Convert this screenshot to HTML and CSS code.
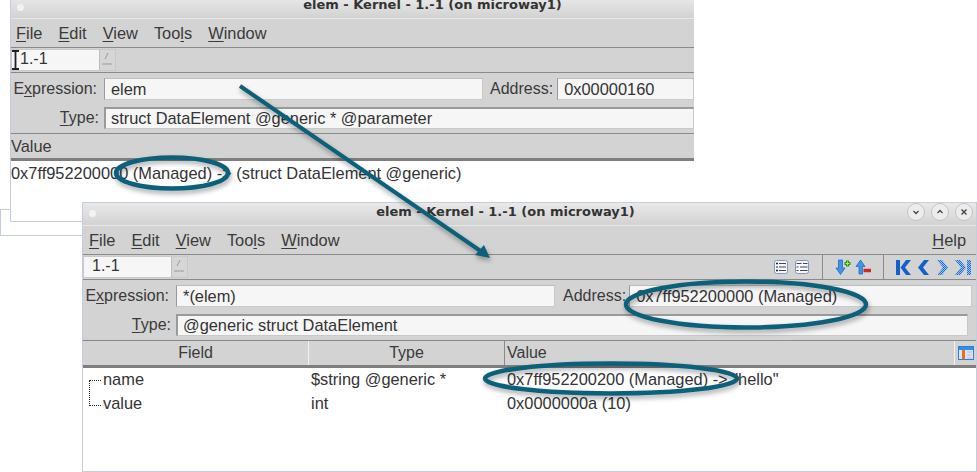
FILE: index.html
```html
<!DOCTYPE html>
<html lang="en">
<head>
<meta charset="utf-8">
<title>elem - Kernel</title>
<link rel="stylesheet" href="styles.css">
</head>
<body>
<div class="desk-line dl-a"></div>
<div class="desk-line dl-b"></div>
<div class="desk-line dl-c"></div>

<section class="win win-back">
  <header class="title"><span class="dot"></span><span class="title-text">elem - Kernel - 1.-1 (on microway1)</span></header>
  <nav class="menu"><span><u>F</u>ile</span><span><u>E</u>dit</span><span><u>V</u>iew</span><span>Too<u>l</u>s</span><span><u>W</u>indow</span></nav>
  <div class="bar">
    <div class="spin"><span class="spin-val">1.-1</span><span class="spin-btn"><svg width="14" height="18" viewBox="0 0 14 18"><path d="M8 3 5 9M2 14h10" stroke="#9a9a9a" fill="none"/></svg></span></div>
    <svg class="ibeam" width="7" height="20" viewBox="0 0 7 20"><path d="M0 1h7M3.500 1v18M0 19h7" stroke="#222" stroke-width="1.800" fill="none"/></svg>
  </div>
  <div class="fields">
    <div class="row row-a"><label class="lab"><span>E<u>x</u>pression:</span></label><div class="inp inp-expr">elem</div><label class="lab2">Address:</label><div class="inp inp-addr">0x00000160</div></div>
    <div class="row row-b"><label class="lab"><span><u>T</u>ype:</span></label><div class="inp inp-full">struct DataElement @generic * @parameter</div></div>
  </div>
  <div class="col-head"><span class="col-plain">Value</span></div>
  <div class="body body-back">0x7ff952200000 (Managed) -&gt; (struct DataElement @generic)</div>
</section>

<section class="win win-front">
  <header class="title"><span class="dot"></span><span class="title-text">elem - Kernel - 1.-1 (on microway1)</span>
    <span class="wbtns">
      <span class="wbtn"><svg width="10" height="10" viewBox="0 0 10 10"><path d="M2.500 4 5 6.500 7.500 4" stroke="#444" stroke-width="1.300" fill="none"/></svg></span>
      <span class="wbtn"><svg width="10" height="10" viewBox="0 0 10 10"><path d="M2.500 6 5 3.500 7.500 6" stroke="#444" stroke-width="1.300" fill="none"/></svg></span>
      <span class="wbtn"><svg width="10" height="10" viewBox="0 0 10 10"><path d="M2.500 2.500 7.500 7.500M7.500 2.500 2.500 7.500" stroke="#444" stroke-width="1.400" fill="none"/></svg></span>
    </span>
  </header>
  <nav class="menu"><span><u>F</u>ile</span><span><u>E</u>dit</span><span><u>V</u>iew</span><span>Too<u>l</u>s</span><span><u>W</u>indow</span><span class="help"><u>H</u>elp</span></nav>
  <div class="bar">
    <div class="spin spin-front"><span class="spin-val">1.-1</span><span class="spin-btn"><svg width="14" height="18" viewBox="0 0 14 18"><path d="M8 3 5 9M2 14h10" stroke="#9a9a9a" fill="none"/></svg></span></div>
    <div class="tools">
      <div class="tgroup tg-list">
        <svg width="14" height="14" viewBox="0 0 14 14"><rect x=".5" y=".5" width="13" height="13" rx="2" fill="#f6f8fc" stroke="#7e97c8"/><path d="M5 3.500h7M5 7h7M5 10.500h7" stroke="#444"/><path d="M2 3.500h2M3 2.500v2M2 7h2M2 10.500h2M3 9.500v2" stroke="#222"/></svg>
        <svg width="14" height="14" viewBox="0 0 14 14"><rect x=".5" y=".5" width="13" height="13" rx="2" fill="#f6f8fc" stroke="#7e97c8"/><path d="M1.500 3.500h5M5 7h7.500M5 10.500h7.500M1.500 7h2M1.500 10.500h2M8 3.500h4.500" stroke="#444"/></svg>
      </div>
      <div class="tgroup tg-move">
        <svg width="16" height="16" viewBox="0 0 16 16"><path d="M3.500 1h4v8H10l-4.500 6.500L1 9h2.500z" fill="#3f94e8" stroke="#1f6cc4" stroke-width=".8"/><path d="M9.500 4.500h6M12.500 1.500v6" stroke="#1d8f1d" stroke-width="3"/><path d="M10.500 4.500h4M12.500 2.500v4" stroke="#a6f060" stroke-width="1.200"/></svg>
        <svg width="16" height="16" viewBox="0 0 16 16"><path d="M4 15V7.500H1L5.500 1 10 7.500H7.500V15z" fill="#3f94e8" stroke="#1f6cc4" stroke-width=".8"/><path d="M8.500 11.500H16" stroke="#d0281e" stroke-width="3.500"/></svg>
      </div>
      <div class="tgroup tg-nav">
        <svg width="15" height="15" viewBox="0 0 15 15"><path d="M0 0h4v15H0zM15 0 9 7.500 15 15H10L4.500 7.500 10 0z" fill="#1560c8"/></svg>
        <svg width="13" height="15" viewBox="0 0 13 15"><path d="M12 0 6 7.500 12 15H7L1 7.500 7 0z" fill="#1560c8"/></svg>
        <svg width="13" height="15" viewBox="0 0 13 15"><defs><pattern id="dith" width="2" height="2" patternUnits="userSpaceOnUse"><rect width="2" height="2" fill="#9cc0ee"/><rect width="1" height="1" fill="#1f6fd8"/><rect x="1" y="1" width="1" height="1" fill="#1f6fd8"/></pattern></defs><path d="M1 0 7 7.500 1 15H6L12 7.500 6 0z" fill="url(#dith)"/></svg>
        <svg width="16" height="15" viewBox="0 0 16 15"><path d="M0 0 6 7.500 0 15H5L11 7.500 5 0zM12 0h4v15h-4z" fill="url(#dith)"/></svg>
      </div>
    </div>
  </div>
  <div class="fields">
    <div class="row row-a"><label class="lab"><span>E<u>x</u>pression:</span></label><div class="inp inp-expr">*(elem)</div><label class="lab2">Address:</label><div class="inp inp-addr2">0x7ff952200000 (Managed)</div></div>
    <div class="row row-b"><label class="lab"><span><u>T</u>ype:</span></label><div class="inp inp-type2">@generic struct DataElement</div></div>
  </div>
  <div class="col-head col-cols">
    <span class="col col-field">Field</span><span class="col col-type">Type</span><span class="col col-value">Value</span>
    <span class="col-icon"><svg width="16" height="14" viewBox="0 0 16 14"><rect x=".5" y=".5" width="15" height="13" fill="#dfe3f2" stroke="#2f7fd8"/><rect x="1" y="1" width="14" height="3" fill="#2f8fe8"/><rect x="4" y="4" width="3" height="9" fill="#e8701e"/><path d="M9 6h5M9 9h5M9 12h5" stroke="#b8b8d8"/></svg></span>
  </div>
  <div class="body body-front">
    <div class="tree-row">
      <span class="t-field t-name">name</span><span class="t-type">$string @generic *</span><span class="t-val">0x7ff952200200 (Managed) -&gt; "hello"</span>
    </div>
    <div class="tree-row">
      <span class="t-field t-value">value</span><span class="t-type">int</span><span class="t-val">0x0000000a (10)</span>
    </div>
  </div>
</section>

<svg class="marks" width="977" height="472" viewBox="0 0 977 472">
  <defs>
    <filter id="sh" x="-10%" y="-20%" width="120%" height="150%"><feDropShadow dx="1" dy="3" stdDeviation="2.500" flood-color="#000" flood-opacity=".35"/></filter>
  </defs>
  <g filter="url(#sh)" fill="none" stroke="#0f6179" stroke-width="4.500">
    <ellipse cx="172" cy="173" rx="56" ry="15.500"/>
    <ellipse cx="746" cy="304.500" rx="120" ry="23"/>
    <ellipse cx="611" cy="378.500" rx="126" ry="15"/>
  </g>
  <g filter="url(#sh)">
    <path d="M240 86 482 252" fill="none" stroke="#0f6179" stroke-width="4"/>
    <path d="M490 258 475 255 484 245z" fill="#0f6179"/>
  </g>
</svg>
</body>
</html>
```
FILE: styles.css
```css
* { box-sizing: border-box; }
html, body { margin: 0; padding: 0; }
body {
  position: relative;
  width: 977px;
  height: 472px;
  overflow: hidden;
  background: #fff;
  font-family: "Liberation Sans", Arial, sans-serif;
  font-size: 16.400px;
  color: #333;
}
u { text-underline-offset: 2px; text-decoration-thickness: 1px; }

.desk-line { position: absolute; background: #c3cde0; }
.dl-a { left: 0; top: 209px; width: 10px; height: 1px; }
.dl-b { left: 0; top: 235px; width: 83px; height: 1px; }
.dl-c { left: 0; top: 209px; width: 1px; height: 27px; }

.win {
  position: absolute;
  background: #fff;
  border: 1px solid #c3cde0;
  display: flex;
  flex-direction: column;
  overflow: hidden;
}
.win-back { left: 10px; top: -4px; width: 684px; height: 226px; border-right: 0; }
.win-front { left: 82px; top: 202px; width: 895px; height: 270px; }

.title {
  position: relative;
  height: 22px;
  flex: none;
  display: flex;
  align-items: center;
  justify-content: center;
  background: linear-gradient(#e9e9e9, #d2d2d2);
  border-bottom: 1px solid #e8e8e8;
}
.win-front .title { height: 23px; padding-bottom: 6px; }
.win-back .title { padding-bottom: 7px; }
.title-text {
  font-family: "DejaVu Sans", sans-serif;
  font-weight: 700;
  font-size: 13px;
  color: #333;
  white-space: nowrap;
}
.win-back .title-text { margin-left: 160px; }
.win-front .title-text { margin-right: 48px; }
.dot {
  position: absolute;
  left: 6px;
  top: 7px;
  width: 7px;
  height: 7px;
  border-radius: 50%;
  background: #f2f2f2;
}
.wbtns {
  position: absolute;
  right: 3px;
  top: 0;
  display: flex;
  gap: 6px;
}
.wbtn {
  width: 18px;
  height: 18px;
  border-radius: 50%;
  border: 1px solid #c4c4c4;
  background: #ececec;
  display: flex;
  align-items: center;
  justify-content: center;
}

.menu {
  height: 29px;
  flex: none;
  display: flex;
  align-items: center;
  gap: 16px;
  padding: 0 6px;
  background: #d3d3d3;
  border-bottom: 1px solid #8a8a8a;
  color: #3a3a3a;
}
.win-back .menu { padding-left: 5px; }
.help { margin-left: auto; padding-right: 4px; }

.bar {
  position: relative;
  height: 25px;
  flex: none;
  display: flex;
  align-items: center;
  background: #d3d3d3;
  border-bottom: 1px solid #8a8a8a;
}
.spin {
  width: 105px;
  height: 22px;
  display: flex;
  background: #f6f6f6;
  border: 1px solid #c9c9c9;
  font-size: 16px;
}
.spin-val { flex: 1; padding-left: 8px; color: #333; }
.spin-btn {
  width: 16px;
  background: #d6d6d6;
  border-left: 1px solid #bdbdbd;
}
.spin-btn svg { display: block; }
.ibeam { position: absolute; left: 1px; top: 2px; }

.tools {
  margin-left: auto;
  height: 100%;
  display: flex;
  align-items: center;
}
.tgroup {
  height: 100%;
  display: flex;
  align-items: center;
  border-right: 1px solid #8a8a8a;
}
.tg-list { gap: 7px; padding: 0 13px 0 0; }
.tg-move { gap: 4px; padding: 0 12px; }
.tg-nav { gap: 6px; padding: 0 5px 0 12px; border-right: 0; }

.fields {
  flex: none;
  background: #d3d3d3;
  padding: 5px 0 4px;
  display: flex;
  flex-direction: column;
  gap: 7px;
  border-bottom: 1px solid #8a8a8a;
}
.row { display: flex; align-items: center; }
.row-a { height: 22px; }
.row-b { height: 22px; }
.lab { width: 86px; flex: none; text-align: right; margin-right: 7px; font-size: 16px; color: #3a3a3a; }
.row-b .lab { width: 88px; margin-right: 5px; }
.lab2 { flex: none; padding: 0 4px 0 7px; font-size: 16px; color: #3a3a3a; }
.win-front .lab2 { padding: 0 3px 0 8px; }
.inp {
  height: 100%;
  background: #f6f6f6;
  border: 1px solid #c9c9c9;
  border-top: 2px solid #9a9a9a;
  border-left: 2px solid #9a9a9a;
  padding-left: 5px;
  flex: none;
  display: flex;
  align-items: center;
  white-space: nowrap;
  overflow: hidden;
  color: #333;
}
.row-a .inp { border-top: 1px solid #bdbdbd; border-left-width: 1px; padding-left: 6px; }
.inp-expr { width: 379px; }
.inp-addr { flex: 1; }
.inp-full { flex: 1; }
.inp-addr2 { width: 343px; }
.inp-type2 { width: 792px; }

.col-head {
  height: 27px;
  flex: none;
  display: flex;
  align-items: center;
  background: #d3d3d3;
  border-bottom: 3px solid #7e7e7e;
  color: #3a3a3a;
}
.col-cols { align-items: stretch; }
.col { display: flex; align-items: center; justify-content: center; border-right: 1px solid #f0f0f0; font-size: 16px; }
.col-field { width: 226px; }
.col-type { width: 196px; }
.col-value { width: 450px; justify-content: flex-start; padding-left: 2px; border-right: 0; border-left: 1px solid #8a8a8a; margin-left: -1px; }
.col-icon {
  width: 22px;
  display: flex;
  align-items: center;
  justify-content: center;
  border-left: 1px solid #f0f0f0;
}

.body { flex: 1; background: #fff; }
.body-back { padding-top: 3px; white-space: nowrap; }
.body-front {
  padding-top: 2px;
  display: flex;
  flex-direction: column;
  gap: 6px;
}
.tree-row { display: flex; height: 18px; align-items: center; white-space: nowrap; }
.t-field { position: relative; width: 228px; padding-left: 20px; flex: none; }
.t-type { width: 196px; flex: none; }
.t-val { flex: none; }
.t-name::before {
  content: "";
  position: absolute;
  left: 6px;
  top: 10px;
  width: 11px;
  height: 24px;
  border-left: 1px dotted #222;
  border-top: 1px dotted #222;
  border-bottom: 1px dotted #222;
}

.marks { position: absolute; left: 0; top: 0; pointer-events: none; }
```
